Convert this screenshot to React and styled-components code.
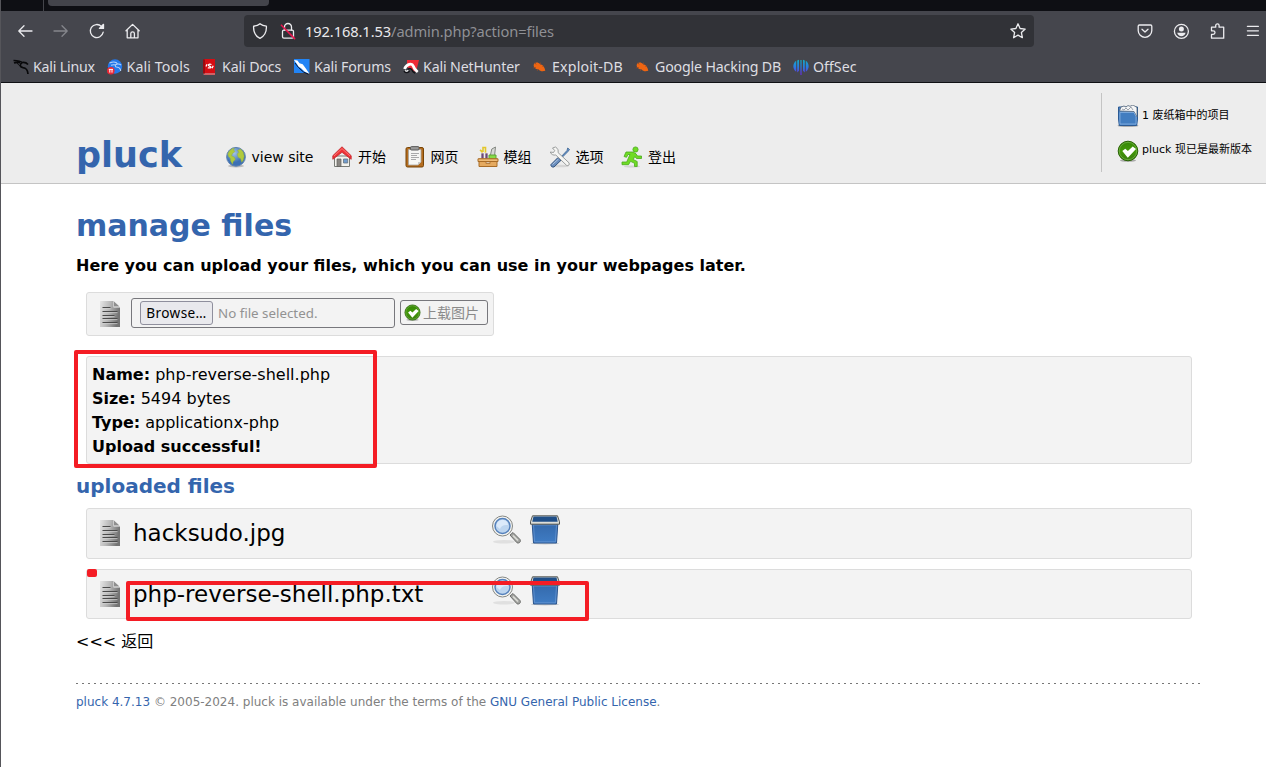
import React from "react";
import styled, { createGlobalStyle } from "styled-components";

const Global = createGlobalStyle`
  * { box-sizing: border-box; }
  body { margin: 0; background: #fff; overflow: hidden; }
  svg { display: block; flex: none; }
`;

const ui = `"Noto Sans", "Noto Sans CJK SC", sans-serif`;
const page = `"DejaVu Sans", "Noto Sans CJK SC", sans-serif`;
const blue = "#3465ad";

const Window = styled.div`
  width: 1266px;
  height: 767px;
  border-left: 1px solid #55555a;
  background: #fff;
  font-family: ${page};
  color: #000;
  overflow: hidden;
`;

/* browser chrome */
const TabStrip = styled.div`
  height: 11px;
  background: #0e0f14;
  display: flex;
`;
const PinnedArea = styled.div`
  width: 43px;
  border-right: 1px solid #44454b;
`;
const ActiveTab = styled.div`
  width: 221px;
  height: 6px;
  margin-left: 4px;
  background: #43444b;
  border-radius: 0 0 4px 4px;
`;
const Chrome = styled.div`
  height: 72px;
  background: #45464d;
  border-bottom: 1px solid #0f1014;
  font-family: ${ui};
`;
const NavBar = styled.div`
  height: 40px;
  display: flex;
  align-items: center;
  padding-left: 15px;
`;
const NavButtons = styled.div`
  display: flex;
  gap: 18px;
  width: 228px;
`;
const AddressBar = styled.div`
  width: 790px;
  height: 32px;
  background: #313237;
  border-radius: 4px;
  display: flex;
  align-items: center;
  padding: 0 7px;
`;
const Url = styled.div`
  flex: 1;
  margin-left: 8px;
  font-size: 14.67px;
  letter-spacing: -0.1px;
  line-height: 20px;
  color: #8f9095;
  white-space: nowrap;
  b { font-weight: 400; color: #e9e9ec; }
`;
const LockWrap = styled.div`
  margin-left: 10px;
`;
const ToolButtons = styled.div`
  display: flex;
  gap: 18px;
  margin-left: 102px;
`;
const Bookmarks = styled.div`
  display: flex;
  height: 31px;
  align-items: center;
  padding-left: 12px;
`;
const Bookmark = styled.div`
  display: flex;
  align-items: center;
  gap: 4px;
  width: ${(p) => p.$w}px;
  flex: none;
  font-size: 14.2px;
  letter-spacing: ${(p) => p.$track}px;
  line-height: 20px;
  color: #dedee2;
  white-space: nowrap;
`;

/* page header */
const Header = styled.header`
  height: 101px;
  background: #ededed;
  border-bottom: 1px solid #c4c4c4;
  display: flex;
  padding-left: 75px;
`;
const Brand = styled.div`
  width: 148.5px;
  margin-top: 52px;
  font-size: 35px;
  line-height: 40px;
  font-weight: 700;
  color: ${blue};
`;
const Menu = styled.nav`
  flex: 1;
  display: flex;
  margin-top: 62px;
`;
const MenuItem = styled.a`
  display: flex;
  gap: 5px;
  width: ${(p) => p.$w}px;
  height: 24px;
  font-size: 14px;
  line-height: 24px;
  white-space: nowrap;
  svg { margin-top: 1px; }
`;
const Status = styled.aside`
  width: 165px;
  height: 79px;
  margin-top: 10px;
  border-left: 1px solid #c4c4c4;
  padding: 12px 0 0 15px;
`;
const StatusItem = styled.div`
  display: flex;
  gap: 3px;
  height: 35px;
  font-size: 11px;
  line-height: ${(p) => p.$line}px;
  white-space: nowrap;
`;

/* page body */
const Main = styled.main`
  padding: 22px 0 0 75px;
`;
const Title = styled.h1`
  margin: 0;
  font-size: 30px;
  line-height: 40px;
  color: ${blue};
`;
const Lead = styled.p`
  margin: 9px 0 15px;
  font-size: 16px;
  line-height: 22px;
  font-weight: 700;
`;
const Panel = styled.div`
  position: relative;
  margin-left: 10px;
  width: ${(p) => p.$w || 1106}px;
  height: ${(p) => p.$h}px;
  background: #f3f3f3;
  border: 1px solid #dcdcdc;
  border-radius: 3px;
`;
const UploadForm = styled(Panel)`
  display: flex;
  padding: 5px 5px 0 12px;
`;
const FileField = styled.div`
  width: 264px;
  height: 30px;
  margin-left: 9px;
  border: 1px solid #77777c;
  border-radius: 3px;
  display: flex;
  align-items: center;
  padding-left: 8px;
  font: 13.33px/20px ${ui};
  color: #929292;
`;
const Browse = styled.button`
  width: 73px;
  height: 24px;
  padding: 0;
  margin-right: 5px;
  border: 1px solid #8f8f9d;
  border-radius: 3px;
  background: #e9e9ed;
  color: #000;
  font: 13.6px/20px ${ui};
  letter-spacing: 0.4px;
  white-space: nowrap;
`;
const Submit = styled.button`
  width: 88px;
  height: 25px;
  margin: 2px 0 0 5px;
  padding: 0 0 0 3px;
  display: flex;
  align-items: center;
  gap: 2px;
  border: 1px solid #77777c;
  border-radius: 3px;
  background: #f3f3f3;
  color: #8a8a8a;
  font: 14px/20px ${page};
  white-space: nowrap;
`;
const IconSlot = styled.div`
  width: 23px;
  padding-top: ${(p) => p.$top || 0}px;
`;
const Info = styled(Panel)`
  margin-top: 20px;
  padding: 6px 5px;
  font-size: 16px;
  line-height: 24px;
`;
const Subtitle = styled.h2`
  margin: 9px 0;
  font-size: 20px;
  line-height: 26px;
  color: ${blue};
`;
const FileRow = styled(Panel)`
  display: flex;
  padding: 0 0 0 12px;
  margin-bottom: 10px;
`;
const FileName = styled.div`
  width: 358px;
  margin: 8px 0 0 11px;
  font-size: 23px;
  line-height: 32px;
  white-space: nowrap;
`;
const Actions = styled.div`
  display: flex;
  gap: 6px;
  padding-top: 6px;
`;
const Back = styled.div`
  margin-top: 11px;
  font-size: 16px;
  line-height: 24px;
`;
const Footer = styled.footer`
  width: 1128px;
  margin-top: 29px;
  padding-top: 9px;
  border-top: 1px dashed transparent;
  background: repeating-linear-gradient(90deg, #777 0 2px, transparent 2px 6px) top / 100% 1px no-repeat border-box;
  font-size: 12px;
  line-height: 18px;
  color: #808080;
  a { color: ${blue}; }
`;
const Marker = styled.div`
  position: absolute;
  left: ${(p) => p.$x}px;
  top: ${(p) => p.$y}px;
  width: ${(p) => p.$w}px;
  height: ${(p) => p.$h}px;
  border: 4px solid #f41c24;
  border-radius: 2px;
  z-index: 2;
`;

/* line icons of the browser toolbar */
const Line = ({ children, size = 18, dim, view = 18 }) => (
  <svg width={size} height={size} viewBox={`0 0 ${view} ${view}`} fill="none"
    stroke={dim ? "#85868c" : "#ececef"} strokeWidth="1.3" strokeLinecap="round" strokeLinejoin="round">
    {children}
  </svg>
);

const BackIcon = () => <Line><path d="M16 9H3M8 3.800 2.800 9 8 14.200" /></Line>;
const ForwardIcon = () => <Line dim><path d="M2 9h13M10 3.800 15.200 9 10 14.200" /></Line>;
const ReloadIcon = () => (
  <Line><path d="M15.200 10.200A6.500 6.500 0 1 1 13.400 4.400L15.200 6" /><path d="M11.400 6.400h4.100V2.300z" fill="#ececef" /></Line>
);
const HomeIcon = () => (
  <Line><path d="M2 8.800 8.600 2.400l6.600 6.400M3.200 8v7.800H14V8M6.800 15.600v-4a1.800 1.800 0 0 1 3.600 0v4" /></Line>
);
const ShieldIcon = () => (
  <Line><path d="M9 1.700C7.300 3.200 5 4 2.600 4.200 2.300 9.600 4.200 14 9 16.400 13.800 14 15.700 9.600 15.400 4.200 13 4 10.700 3.200 9 1.700z" /></Line>
);
const LockIcon = () => (
  <Line>
    <rect x="3.500" y="8.200" width="11" height="8" rx="1.400" />
    <path d="M5.500 8V5a3.500 3.500 0 0 1 7 0v3" />
    <path d="M2.400 3.200 15.600 16.600" stroke="#e8174f" strokeWidth="1.600" />
  </Line>
);
const StarIcon = () => (
  <Line><path d="m9 1.800 2.100 4.700 5.100.6-3.800 3.500 1 5.100L9 13.100l-4.400 2.600 1-5.100-3.800-3.500 5.100-.6z" /></Line>
);
const PocketIcon = () => (
  <Line><path d="M3.400 3h11.200c.8 0 1.200.5 1.200 1.200v4.300a6.800 6.800 0 0 1-13.600 0V4.200C2.200 3.500 2.600 3 3.400 3zM6 7.300l3 2.800 3-2.800" /></Line>
);
const AccountIcon = () => (
  <Line>
    <circle cx="9.400" cy="9.300" r="7" />
    <circle cx="9.400" cy="7.100" r="2.500" fill="#ececef" stroke="none" />
    <path d="M5.200 10.800h8.400c-.6 2.200-2.100 3.500-4.200 3.500s-3.600-1.300-4.200-3.500z" fill="#ececef" stroke="none" />
  </Line>
);
const PuzzleIcon = () => (
  <Line>
    <path d="M3.500 8V5.200h4.200V3.600a1.700 1.700 0 0 1 3.400 0v1.600h4.600v11H3.500v-3.800h1.700a1.700 1.700 0 0 0 0-3.600H3.500z" />
  </Line>
);
const MenuIcon = () => <Line><path d="M3.400 4.300h11M3.400 8.800h11M3.400 13.300h11" /></Line>;

/* bookmark icons */
const Fav = ({ children }) => <svg width="16" height="16" viewBox="0 0 16 16">{children}</svg>;
const FAVS = {
  linux: (
    <Fav>
      <path d="M.5 1.500c4 .2 7 .5 9 2.200M1 4c2-.8 4-.8 6-.4M9.300 3.500C6.500 5 6.500 8 10 8.600c3 .4 4.600 1.500 5 6.400M9.500 3.500c2.200-.3 4 .3 5.500 2" fill="none" stroke="#08080a" strokeWidth="1.700" />
      <path d="M4 3.500c1 2 2 3 3.500 3.500" stroke="#08080a" fill="none" />
    </Fav>
  ),
  tools: (
    <Fav>
      <circle cx="8" cy="7.500" r="7.200" fill="#2378ea" />
      <path d="M2.500 4c4-1.500 7-.8 8 1-3 .4-3 3 0 3.200 2.300.2 3 1.400 3.200 3.800M4 6.300c2-.8 3.500-.6 5-.3M10.500 5c1.700-.2 2.700.3 3.600 1.200" fill="none" stroke="#b5d3fb" strokeWidth="1.100" />
      <circle cx="3.800" cy="11.800" r="3.800" fill="#ed2836" />
      <path d="M1.800 10.400h4.200M2.800 10.400v3.200M5 10.400v3.200" stroke="#fff" />
    </Fav>
  ),
  docs: (
    <Fav>
      <path d="M2 0h11v16H2z" fill="#d60d13" />
      <path d="M1.500 14.500h11.500V15.500H1.500z" fill="#c9b8ba" />
      <path d="M1 .5h2V14.500H1z" fill="#9a0b10" />
      <path d="M9.500 5.500c-3-.9-4 1-2 1.600s2 2.400-1.700 1.700M5 5.200 4 7.400M11.200 6.800l-1.200 2.400" stroke="#fff" strokeWidth="1.300" fill="none" />
    </Fav>
  ),
  forums: (
    <Fav>
      <path d="M0 0h15.500v14H0z" fill="#2284f5" />
      <path d="m0 1 3.500.5 2 2.800 3.200 1 3.300 4.500 3.500 5.200-5-2.500-3.700-3.600-2.500-1.500L3 5z" fill="#fff" />
      <path d="m1 4 3.500 4.500 5 4.500 5 2.300" stroke="#0a1730" strokeWidth="1" fill="none" />
    </Fav>
  ),
  nethunter: (
    <Fav>
      <path d="M4 1h12l-3 12-9-5z" fill="#ee2b37" />
      <path d="M1.500 10C3.500 5 9 3.800 10.200 7c.7 2 1.800 4 4.500 6" fill="none" stroke="#fff" strokeWidth="2.800" />
      <path d="M1 12c1.500 2.300 5 2 5.500-.3M4.800 10.300c2.700-2 4.200 0 5 2.200l2.200 1.800" fill="none" stroke="#111116" strokeWidth="1.400" />
      <path d="M2 11.400c1 1.200 2.800 1 3-.4" fill="none" stroke="#fff" strokeWidth="1.200" />
    </Fav>
  ),
  bug: (
    <Fav>
      <path d="M1.600 6c1-3 4.200-3.300 6.700-.8 3 .7 4.400 3 5 6.600-2.900.7-5.200.4-6.900-1.400C3.400 10.500 1.600 8.500 1.600 6z" fill="#ee6512" />
      <path d="m3 3.500 1 2M8.500 3.500v2M.8 9l3-.5M5 12l1.500-2M12 6.500l-1.500 1.500" stroke="#8c4a2c" strokeWidth=".8" />
    </Fav>
  ),
  offsec: (
    <Fav>
      <defs><linearGradient id="os" gradientUnits="userSpaceOnUse" x1="0" y1="0" x2="0" y2="16"><stop stopColor="#0fb2c0" /><stop offset=".5" stopColor="#2a7be2" /><stop offset="1" stopColor="#6a28dd" /></linearGradient></defs>
      <path d="M3.200 1.800v11C-.6 10.500-.6 4.200 3.200 1.800zM12.800 1.800v11c3.800-2.300 3.800-8.600 0-11zM4.200 1.400 6 .8v11L4.200 13.400zM11.800 1.400 10 .8v11l1.800 1.600zM7.400 1h1.200v15H7.400z" fill="url(#os)" />
    </Fav>
  ),
};

const BOOKMARKS = [
  ["linux", "Kali Linux", 93.5, -0.2],
  ["tools", "Kali Tools", 95.5, 0.12],
  ["docs", "Kali Docs", 92, -0.12],
  ["forums", "Kali Forums", 109, -0.13],
  ["nethunter", "Kali NetHunter", 129, -0.14],
  ["bug", "Exploit-DB", 103, 0.17],
  ["bug", "Google Hacking DB", 158, -0.16],
  ["offsec", "OffSec", 70, 0],
];

/* page icons */
const Pic = ({ size = 22, view = 22, children }) => (
  <svg width={size} height={size} viewBox={`0 0 ${view} ${view}`}>{children}</svg>
);
const GlobeIcon = () => (
  <Pic>
    <defs><radialGradient id="sea" cx=".4" cy=".3"><stop stopColor="#a5c5e8" /><stop offset="1" stopColor="#3c70b4" /></radialGradient></defs>
    <ellipse cx="11" cy="20" rx="8" ry="1.500" fill="#bbb" />
    <circle cx="11" cy="10.800" r="9.400" fill="url(#sea)" stroke="#5f83b2" />
    <path d="M4 5.500c2-2.500 3.500-3.200 5.500-3.300l-1 1.800 1.500 1.500-2.500 2-1 2.200 2.800 1.500 1 2.300-2.200 2.200-.6 2.600-1.700-3-.5-3L3.500 10.500 2.800 8zM12.500 4.500l3-1.500 2.700 3 1 4.300-1 4-1.500 2-1-3.500-2.500-1.500-1-3.300 1.800-1.800z" fill="#b0ca3c" stroke="#93ac46" strokeWidth=".5" />
  </Pic>
);
const HouseIcon = () => (
  <Pic>
    <path d="M3.500 10h15v10.500h-15z" fill="#f3f2ed" stroke="#777a75" />
    <path d="M6 13h4v7.500H6z" fill="#8a8783" stroke="#5f5f5c" strokeWidth=".7" />
    <path d="M12.500 13h4.200v4h-4.200z" fill="#719cce" stroke="#66747e" strokeWidth=".8" />
    <path d="M1.800 9.700 11 .8l9.200 8.900v3.600L11 6.300l-9.200 7z" fill="#ee3035" stroke="#c3262c" strokeWidth=".8" />
    <path d="M3 10 11 2.600l8 7.400" fill="none" stroke="#ff8a84" strokeWidth=".8" />
  </Pic>
);
const ClipboardIcon = () => (
  <Pic>
    <rect x="2" y="1.500" width="17.500" height="19.500" rx="1.500" fill="#b46d20" stroke="#784506" />
    <path d="M4.500 3.500h12.500v12.500l-3 3h-9.500z" fill="#f7f7f4" stroke="#a7a7a2" strokeWidth=".8" />
    <path d="M14 19v-3h3z" fill="#c9c9c5" />
    <rect x="6.500" y=".6" width="8.500" height="3.400" rx="1" fill="#999" stroke="#5d5d5d" />
    <path d="M7 7.500h8M7 9.500h6M7 11.500h8M7 13.500h5" stroke="#aaa" />
  </Pic>
);
const ToolboxIcon = () => (
  <Pic>
    <path d="M5 12V5.500L3 4M6 6V1.500h2.500V7" fill="none" stroke="#e3c72c" strokeWidth="1.600" />
    <path d="m13 11 1.800-8L18.500 1l-1 9" fill="#d7d9d5" stroke="#858983" />
    <path d="M4 7h3v6H4zM8 7h3v6H8z" fill="#6b4877" stroke="#f4f1e9" strokeWidth=".7" />
    <path d="M12 9h7v4h-7z" fill="#86db46" stroke="#5fa435" />
    <path d="M2 13h18v7.500H2z" fill="#e5aa60" stroke="#a96c27" />
    <path d="M1 12.800h20v2.700H1z" fill="#efbc78" stroke="#a96c27" />
    <path d="M9 16h4v1.500H9z" fill="#fff" stroke="#a96c27" strokeWidth=".8" />
  </Pic>
);
const WrenchIcon = () => (
  <Pic>
    <ellipse cx="11" cy="20" rx="9" ry="1.300" fill="#d5d5d5" />
    <path d="m10.500 12.500 7.500-8 .7-2.500L20.500 3.500l-1.500 2-8 8" fill="#6b97ce" stroke="#365e8d" strokeWidth=".8" />
    <path d="m2 18.500 7-7 3 2.800-7 6.700c-2 .5-3.500-.8-3-2.500z" fill="#698dbd" stroke="#36567f" />
    <path d="m3.500 18.500 6-5.500" stroke="#b2c8e2" />
    <path d="M3.500 2 6.500 1C9 2.500 9.600 4.500 9 6.500l11 10.300c1 2-.8 3.500-2.500 2.500L6.800 9C4.500 9.500 2 8.500 1.300 6L4.500 6.500l1.200-2z" fill="#f5f5f3" stroke="#858989" strokeWidth=".8" />
  </Pic>
);
const RunnerIcon = () => (
  <Pic>
    <ellipse cx="11" cy="20.500" rx="8" ry="1" fill="#d4d4d4" />
    <circle cx="14.500" cy="3.500" r="2.600" fill="#70dc25" stroke="#4aab1d" strokeWidth=".8" />
    <path d="M5 6h7l3 1.800 1.500 2.200H20.500v2.500h-5l-1.700-2-1.600 3 4 2v5h-2.700v-3.200l-4-2-2 3.400H1v-2.700h4.700L9 8.500H7l-1.500 2.800L3 10.500z" fill="#70dc25" stroke="#4aab1d" strokeWidth=".8" strokeLinejoin="round" />
  </Pic>
);
const CheckIcon = ({ size = 22 }) => (
  <Pic size={size}>
    <defs><linearGradient id="grn" x2="0" y2="1"><stop stopColor="#348605" /><stop offset=".5" stopColor="#439909" /><stop offset="1" stopColor="#397b0e" /></linearGradient></defs>
    <ellipse cx="11" cy="20.500" rx="8" ry="1.300" fill="#aaa" />
    <circle cx="11" cy="11" r="9.800" fill="url(#grn)" stroke="#286004" />
    <circle cx="11" cy="11" r="8.700" fill="none" stroke="#72b447" strokeWidth=".8" />
    <path d="m5.300 11 3-2.300 2.600 2.300 4.800-4.600 3.300 2.500-8.200 8.900z" fill="#fff" />
  </Pic>
);
const TrashFullIcon = () => (
  <Pic>
    <ellipse cx="11" cy="20.800" rx="10.500" ry="1" fill="#999" />
    <path d="M1.500 2h19V14L19.700 20.500H2.300L1.500 14z" fill="#4c86c8" stroke="#2b5a94" />
    <path d="M2.500 6 4 2l3-1 2 1 2-1.500 2 .8L16 0l4 2.500v9.500l-3-5.500z" fill="#f4f5f6" stroke="#54657a" strokeWidth=".8" />
    <path d="m5 4 2 1 2-2 2 2 3-3 2 3" fill="none" stroke="#77808c" strokeWidth=".7" />
    <path d="M3 7.500h14l2 4V19H3z" fill="#427dc0" stroke="#8fb7e5" strokeWidth=".7" />
  </Pic>
);
const DocIcon = () => (
  <svg width="23" height="28" viewBox="0 0 23 28">
    <defs><linearGradient id="doc" x2="1" y2=".25"><stop stopColor="#e6e6e6" /><stop offset=".5" stopColor="#b8b8b8" /><stop offset="1" stopColor="#747474" /></linearGradient></defs>
    <path d="M1 1h13.500v6.500H21V27H1z" fill="url(#doc)" />
    <path d="m15 1.500 5.500 5H15z" fill="#8e8e8e" />
    <path d="M3.500 7.500h8M3.500 11.500h15M3.500 15.500h12M3.500 18.500h15M3.500 22.500h15" stroke="#4a4a4a" strokeWidth="1.100" />
    <path d="M3.500 8.600h8M3.500 12.600h15M3.500 16.600h12M3.500 19.600h15M3.500 23.600h15" stroke="#d2d2d2" strokeWidth=".7" />
  </svg>
);
const MagnifierIcon = () => (
  <Pic size={32} view={32}>
    <ellipse cx="13" cy="26.800" rx="11" ry="1.800" fill="#e0e0e0" />
    <path d="m19 20 3-2.500 7 7c1.300 2.300-1 4.200-3 3.300z" fill="#a3a4a1" stroke="#6b6c6a" />
    <path d="m22 20.500 5 5" stroke="#deded9" strokeWidth="1.500" />
    <circle cx="11.500" cy="11" r="10" fill="#f4f4f1" stroke="#858783" />
    <circle cx="11.500" cy="11" r="7.500" fill="#bdd5ef" stroke="#5581bb" strokeWidth="1.500" />
    <path d="M5.500 11c0-4 3-6 6-6 3.500 0 5.500 2.300 5.500 5-4-.5-7 .5-8 4z" fill="#dceafa" />
  </Pic>
);
const TrashIcon = () => (
  <Pic size={32} view={32}>
    <defs><linearGradient id="bin" x2="0" y2="1"><stop stopColor="#3367a8" /><stop offset="1" stopColor="#3f7cc4" /></linearGradient></defs>
    <ellipse cx="16" cy="28.400" rx="14" ry="1" fill="#ccc" />
    <path d="M3 6h26L27.500 28H4.500z" fill="url(#bin)" stroke="#2b548c" />
    <path d="M4.500 10h23L26.400 26.800H5.600z" fill="none" stroke="#6b9ad4" strokeWidth=".7" />
    <path d="M3.500.8h25l2 6v2.400h-29V6.800z" fill="#dcdeda" stroke="#555753" />
    <path d="M4.500 1.500h23l1.200 5.200H3.300z" fill="#204f88" />
  </Pic>
);

const MENU = [
  [GlobeIcon, "view site", 106.5],
  [HouseIcon, "开始", 72.5],
  [ClipboardIcon, "网页", 73],
  [ToolboxIcon, "模组", 72],
  [WrenchIcon, "选项", 72.5],
  [RunnerIcon, "登出", 80],
];

export default function App() {
  return (
    <Window>
      <Global />
      <TabStrip><PinnedArea /><ActiveTab /></TabStrip>
      <Chrome>
        <NavBar>
          <NavButtons><BackIcon /><ForwardIcon /><ReloadIcon /><HomeIcon /></NavButtons>
          <AddressBar>
            <ShieldIcon />
            <LockWrap><LockIcon /></LockWrap>
            <Url><b>192.168.1.53</b>/admin.php?action=files</Url>
            <StarIcon />
          </AddressBar>
          <ToolButtons><PocketIcon /><AccountIcon /><PuzzleIcon /><MenuIcon /></ToolButtons>
        </NavBar>
        <Bookmarks>
          {BOOKMARKS.map(([icon, label, w, track]) => (
            <Bookmark key={label} $w={w} $track={track}>{FAVS[icon]}{label}</Bookmark>
          ))}
        </Bookmarks>
      </Chrome>

      <Header>
        <Brand>pluck</Brand>
        <Menu>
          {MENU.map(([Icon, label, w]) => (
            <MenuItem key={label} $w={w}><Icon />{label}</MenuItem>
          ))}
        </Menu>
        <Status>
          <StatusItem $line={21}><TrashFullIcon />1 废纸箱中的项目</StatusItem>
          <StatusItem $line={19}><CheckIcon />pluck 现已是最新版本</StatusItem>
        </Status>
      </Header>

      <Main>
        <Title>manage files</Title>
        <Lead>Here you can upload your files, which you can use in your webpages later.</Lead>
        <UploadForm $w={408} $h={44}>
          <IconSlot $top={2}><DocIcon /></IconSlot>
          <FileField><Browse>Browse…</Browse>No file selected.</FileField>
          <Submit><CheckIcon size={17} />上载图片</Submit>
        </UploadForm>
        <Info $h={108}>
          <div><b>Name:</b> php-reverse-shell.php</div>
          <div><b>Size:</b> 5494 bytes</div>
          <div><b>Type:</b> applicationx-php</div>
          <div><b>Upload successful!</b></div>
          <Marker $x={-13} $y={-7} $w={303} $h={118} />
        </Info>
        <Subtitle>uploaded files</Subtitle>
        <FileRow $h={51}>
          <IconSlot $top={10}><DocIcon /></IconSlot>
          <FileName>hacksudo.jpg</FileName>
          <Actions><MagnifierIcon /><TrashIcon /></Actions>
        </FileRow>
        <FileRow $h={50}>
          <IconSlot $top={10}><DocIcon /></IconSlot>
          <FileName>php-reverse-shell.php.txt</FileName>
          <Actions><MagnifierIcon /><TrashIcon /></Actions>
          <Marker $x={0} $y={-1} $w={10} $h={7} />
          <Marker $x={39} $y={11} $w={463} $h={40} />
        </FileRow>
        <Back>&lt;&lt;&lt; 返回</Back>
        <Footer>
          <a>pluck 4.7.13</a> © 2005-2024. pluck is available under the terms of the <a>GNU General Public License</a>.
        </Footer>
      </Main>
    </Window>
  );
}
